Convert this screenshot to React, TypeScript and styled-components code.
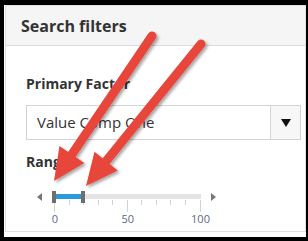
import * as React from "react";
import styled, { createGlobalStyle } from "styled-components";

const GlobalStyle = createGlobalStyle`
  html, body {
    margin: 0;
    padding: 0;
  }
  body {
    width: 308px;
    height: 241px;
    overflow: hidden;
    background: #000;
    font-family: "Open Sans", "Liberation Sans", sans-serif;
    color: #333;
  }
`;

const Frame = styled.div`
  position: relative;
  width: 308px;
  height: 241px;
  box-sizing: border-box;
  background: #000;
  padding: 5px 2px 4px 4px;
`;

const Sheet = styled.div`
  height: 100%;
  box-sizing: border-box;
  background: #fff;
  padding: 0 0 5px 1px;
  display: flex;
  flex-direction: column;
`;

const Panel = styled.section`
  flex: 1;
  border: 1px solid #e1e1e1;
  display: flex;
  flex-direction: column;
`;

const Header = styled.div`
  height: 39px;
  line-height: 40px;
  padding: 0 15px;
  background: #f5f5f5;
  border-bottom: 1px solid #dcdcdc;
  font-size: 16px;
  font-weight: 700;
  color: #333;
`;

const Body = styled.div`
  padding: 28px 4px 0 20px;
  display: flex;
  flex-direction: column;
`;

const Label = styled.div<{ gap?: number }>`
  font-size: 14px;
  line-height: 20px;
  font-weight: 700;
  color: #333;
  margin-top: ${p => p.gap || 0}px;
`;

const Select = styled.div`
  margin-top: 11px;
  height: 35px;
  box-sizing: border-box;
  border: 1px solid #d4d4d4;
  display: flex;
`;

const SelectText = styled.div`
  flex: 1;
  padding-left: 10px;
  font-size: 15px;
  line-height: 33px;
  color: #333;
`;

const SelectButton = styled.div`
  width: 29px;
  border-left: 1px solid #d4d4d4;
  background: #f7f7f7;
  display: flex;
  align-items: center;
  justify-content: center;
`;

const Caret = styled.span`
  width: 0;
  height: 0;
  border-left: 5px solid transparent;
  border-right: 5px solid transparent;
  border-top: 8px solid #111;
`;

const SliderRow = styled.div`
  margin-top: 19px;
  padding-left: 11px;
  display: flex;
  align-items: flex-start;
  gap: 10px;
`;

const Nudge = styled.span<{ dir: "left" | "right" }>`
  margin-top: 2px;
  width: 0;
  height: 0;
  border-top: 4px solid transparent;
  border-bottom: 4px solid transparent;
  ${p =>
    p.dir === "left"
      ? "border-right: 5px solid #777;"
      : "border-left: 5px solid #777;"}
`;

const Scale = styled.div`
  position: relative;
  width: 149px;
  height: 33px;
`;

const Track = styled.div`
  position: absolute;
  left: 0;
  right: 0;
  top: 3px;
  height: 5px;
  background: #e4e4e4;
`;

const Fill = styled.div`
  position: absolute;
  top: 3px;
  height: 5px;
  background: #2a9ad8;
`;

const Handle = styled.div`
  position: absolute;
  top: 0;
  width: 4px;
  height: 12px;
  margin-left: -2px;
  background: #6e6e6e;
`;

const Tick = styled.div<{ major: boolean }>`
  position: absolute;
  top: 9px;
  width: 1px;
  height: ${p => (p.major ? 12 : 5)}px;
  background: #d2d2d2;
`;

const TickLabel = styled.div`
  position: absolute;
  top: 20px;
  transform: translateX(-50%);
  font-size: 11px;
  line-height: 15px;
  color: #5e6a80;
`;

const Overlay = styled.svg`
  position: absolute;
  left: 0;
  top: 0;
  pointer-events: none;
`;

type Pt = [number, number];

const ORIGIN = 2; // px from scale left edge to value 0
const SPAN = 145.5; // px for 100 units
const pos = (v: number) => ORIGIN + (v / 100) * SPAN;

function RedArrow({ tail, tip }: { tail: Pt; tip: Pt }) {
  const dx = tip[0] - tail[0];
  const dy = tip[1] - tail[1];
  const len = Math.hypot(dx, dy);
  const ux = dx / len;
  const uy = dy / len;
  const head = 32;
  const half = 15;
  const bx = tip[0] - ux * head;
  const by = tip[1] - uy * head;
  const nx = -uy;
  const ny = ux;
  const pts = [
    [tip[0], tip[1]],
    [bx + nx * half, by + ny * half],
    [bx - nx * half, by - ny * half],
  ]
    .map(p => p.join(","))
    .join(" ");
  return (
    <g filter="url(#shade)">
      <line
        x1={tail[0]}
        y1={tail[1]}
        x2={bx + ux * 4}
        y2={by + uy * 4}
        stroke="#e8443b"
        strokeWidth={9}
        strokeLinecap="round"
      />
      <polygon points={pts} fill="#e8443b" />
    </g>
  );
}

const low = 0;
const high = 20;
const ticks = Array.from({ length: 11 }, (_, i) => i * 10);

export default function App() {
  return (
    <Frame>
      <GlobalStyle />
      <Sheet>
        <Panel>
          <Header>Search filters</Header>
          <Body>
            <Label>Primary Factor</Label>
            <Select>
              <SelectText>Value Comp One</SelectText>
              <SelectButton>
                <Caret />
              </SelectButton>
            </Select>
            <Label gap={12}>Range</Label>
            <SliderRow>
              <Nudge dir="left" />
              <Scale>
                <Track />
                <Fill
                  style={{ left: pos(low) + 2, width: pos(high) - pos(low) - 4 }}
                />
                {ticks.map(t => (
                  <Tick key={t} major={t % 50 === 0} style={{ left: pos(t) }} />
                ))}
                {[0, 50, 100].map(t => (
                  <TickLabel key={t} style={{ left: pos(t) + 1 }}>
                    {t}
                  </TickLabel>
                ))}
                <Handle style={{ left: pos(low) }} />
                <Handle style={{ left: pos(high) }} />
              </Scale>
              <Nudge dir="right" />
            </SliderRow>
          </Body>
        </Panel>
      </Sheet>
      <Overlay width={308} height={241} viewBox="0 0 308 241">
        <defs>
          <filter id="shade" x="-20%" y="-20%" width="140%" height="140%">
            <feDropShadow dx="2" dy="2" stdDeviation="1.6" floodColor="#000" floodOpacity="0.35" />
          </filter>
        </defs>
        <RedArrow tail={[152, 36]} tip={[54, 181]} />
        <RedArrow tail={[201, 44]} tip={[86, 186]} />
      </Overlay>
    </Frame>
  );
}
